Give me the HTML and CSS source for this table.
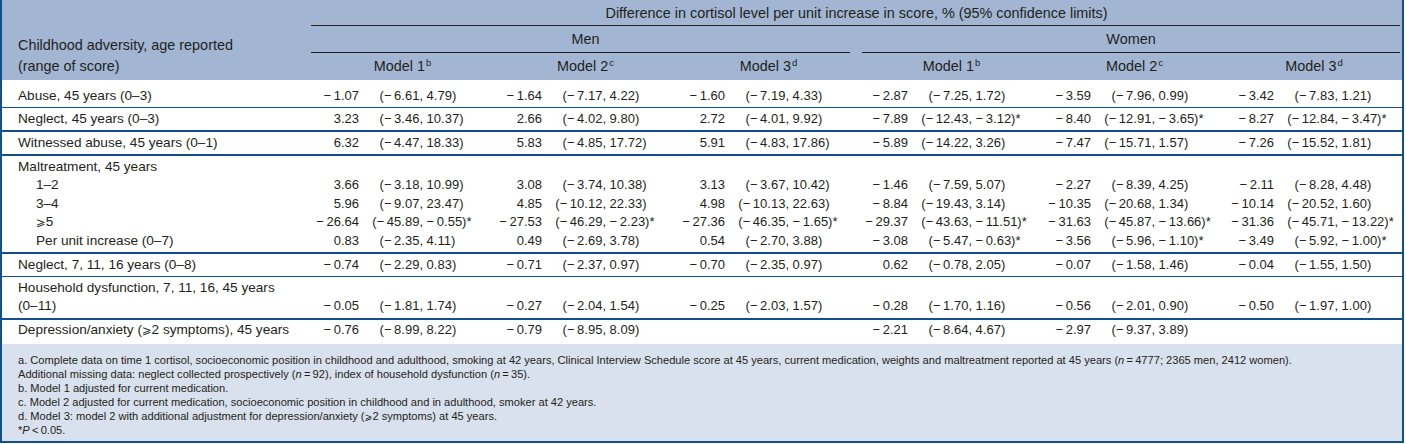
FILE: index.html
```html
<!DOCTYPE html>
<html lang="en">
<head>
<meta charset="utf-8">
<title>Childhood adversity and cortisol</title>
<link rel="stylesheet" href="styles.css">
</head>
<body>
<div class="tbl-wrap">
<table class="tbl">
<colgroup>
<col class="c-label">
<col class="c-model">
<col class="c-model">
<col class="c-model">
<col class="c-model">
<col class="c-model">
<col class="c-last">
</colgroup>
<thead>
<tr class="h1">
<th rowspan="3" class="h-label">Childhood adversity, age reported<br>(range of score)</th>
<th colspan="6" class="rule rule-top">Difference in cortisol level per unit increase in score, % (95% confidence limits)</th>
</tr>
<tr class="h2">
<th colspan="3" class="rule rule-men">Men</th>
<th colspan="3" class="rule rule-women">Women</th>
</tr>
<tr class="h3">
<th>Model 1<sup>b</sup></th>
<th>Model 2<sup>c</sup></th>
<th>Model 3<sup>d</sup></th>
<th>Model 1<sup>b</sup></th>
<th>Model 2<sup>c</sup></th>
<th>Model 3<sup>d</sup></th>
</tr>
</thead>
<tbody>
<tr class="first line-thin">
<td class="lab">Abuse, 45 years (0–3)</td>
<td><span class="v">−&thinsp;1.07</span><span class="cl">(−&thinsp;6.61,</span> 4.79)</td>
<td><span class="v">−&thinsp;1.64</span><span class="cl">(−&thinsp;7.17,</span> 4.22)</td>
<td><span class="v">−&thinsp;1.60</span><span class="cl">(−&thinsp;7.19,</span> 4.33)</td>
<td><span class="v">−&thinsp;2.87</span><span class="cl">(−&thinsp;7.25,</span> 1.72)</td>
<td><span class="v">−&thinsp;3.59</span><span class="cl">(−&thinsp;7.96,</span> 0.99)</td>
<td><span class="v">−&thinsp;3.42</span><span class="cl">(−&thinsp;7.83,</span> 1.21)</td>
</tr>
<tr class="line-thick">
<td class="lab">Neglect, 45 years (0–3)</td>
<td><span class="v">3.23</span><span class="cl">(−&thinsp;3.46,</span> 10.37)</td>
<td><span class="v">2.66</span><span class="cl">(−&thinsp;4.02,</span> 9.80)</td>
<td><span class="v">2.72</span><span class="cl">(−&thinsp;4.01,</span> 9.92)</td>
<td><span class="v">−&thinsp;7.89</span><span class="cl">(−&thinsp;12.43,</span> −&thinsp;3.12)*</td>
<td><span class="v">−&thinsp;8.40</span><span class="cl">(−&thinsp;12.91,</span> −&thinsp;3.65)*</td>
<td><span class="v">−&thinsp;8.27</span><span class="cl">(−&thinsp;12.84,</span> −&thinsp;3.47)*</td>
</tr>
<tr class="line-thick">
<td class="lab">Witnessed abuse, 45 years (0–1)</td>
<td><span class="v">6.32</span><span class="cl">(−&thinsp;4.47,</span> 18.33)</td>
<td><span class="v">5.83</span><span class="cl">(−&thinsp;4.85,</span> 17.72)</td>
<td><span class="v">5.91</span><span class="cl">(−&thinsp;4.83,</span> 17.86)</td>
<td><span class="v">−&thinsp;5.89</span><span class="cl">(−&thinsp;14.22,</span> 3.26)</td>
<td><span class="v">−&thinsp;7.47</span><span class="cl">(−&thinsp;15.71,</span> 1.57)</td>
<td><span class="v">−&thinsp;7.26</span><span class="cl">(−&thinsp;15.52,</span> 1.81)</td>
</tr>
<tr class="grp-top">
<td class="lab">Maltreatment, 45 years</td>
<td></td><td></td><td></td><td></td><td></td><td></td>
</tr>
<tr class="grp-mid">
<td class="lab sub">1–2</td>
<td><span class="v">3.66</span><span class="cl">(−&thinsp;3.18,</span> 10.99)</td>
<td><span class="v">3.08</span><span class="cl">(−&thinsp;3.74,</span> 10.38)</td>
<td><span class="v">3.13</span><span class="cl">(−&thinsp;3.67,</span> 10.42)</td>
<td><span class="v">−&thinsp;1.46</span><span class="cl">(−&thinsp;7.59,</span> 5.07)</td>
<td><span class="v">−&thinsp;2.27</span><span class="cl">(−&thinsp;8.39,</span> 4.25)</td>
<td><span class="v">−&thinsp;2.11</span><span class="cl">(−&thinsp;8.28,</span> 4.48)</td>
</tr>
<tr class="grp-mid">
<td class="lab sub">3–4</td>
<td><span class="v">5.96</span><span class="cl">(−&thinsp;9.07,</span> 23.47)</td>
<td><span class="v">4.85</span><span class="cl">(−&thinsp;10.12,</span> 22.33)</td>
<td><span class="v">4.98</span><span class="cl">(−&thinsp;10.13,</span> 22.63)</td>
<td><span class="v">−&thinsp;8.84</span><span class="cl">(−&thinsp;19.43,</span> 3.14)</td>
<td><span class="v">−&thinsp;10.35</span><span class="cl">(−&thinsp;20.68,</span> 1.34)</td>
<td><span class="v">−&thinsp;10.14</span><span class="cl">(−&thinsp;20.52,</span> 1.60)</td>
</tr>
<tr class="grp-mid">
<td class="lab sub"><span class="ge">⩾</span>5</td>
<td><span class="v">−&thinsp;26.64</span><span class="cl">(−&thinsp;45.89,</span> −&thinsp;0.55)*</td>
<td><span class="v">−&thinsp;27.53</span><span class="cl">(−&thinsp;46.29,</span> −&thinsp;2.23)*</td>
<td><span class="v">−&thinsp;27.36</span><span class="cl">(−&thinsp;46.35,</span> −&thinsp;1.65)*</td>
<td><span class="v">−&thinsp;29.37</span><span class="cl">(−&thinsp;43.63,</span> −&thinsp;11.51)*</td>
<td><span class="v">−&thinsp;31.63</span><span class="cl">(−&thinsp;45.87,</span> −&thinsp;13.66)*</td>
<td><span class="v">−&thinsp;31.36</span><span class="cl">(−&thinsp;45.71,</span> −&thinsp;13.22)*</td>
</tr>
<tr class="grp-bot line-thick">
<td class="lab sub">Per unit increase (0–7)</td>
<td><span class="v">0.83</span><span class="cl">(−&thinsp;2.35,</span> 4.11)</td>
<td><span class="v">0.49</span><span class="cl">(−&thinsp;2.69,</span> 3.78)</td>
<td><span class="v">0.54</span><span class="cl">(−&thinsp;2.70,</span> 3.88)</td>
<td><span class="v">−&thinsp;3.08</span><span class="cl">(−&thinsp;5.47,</span> −&thinsp;0.63)*</td>
<td><span class="v">−&thinsp;3.56</span><span class="cl">(−&thinsp;5.96,</span> −&thinsp;1.10)*</td>
<td><span class="v">−&thinsp;3.49</span><span class="cl">(−&thinsp;5.92,</span> −&thinsp;1.00)*</td>
</tr>
<tr class="line-thin">
<td class="lab">Neglect, 7, 11, 16 years (0–8)</td>
<td><span class="v">−&thinsp;0.74</span><span class="cl">(−&thinsp;2.29,</span> 0.83)</td>
<td><span class="v">−&thinsp;0.71</span><span class="cl">(−&thinsp;2.37,</span> 0.97)</td>
<td><span class="v">−&thinsp;0.70</span><span class="cl">(−&thinsp;2.35,</span> 0.97)</td>
<td><span class="v">0.62</span><span class="cl">(−&thinsp;0.78,</span> 2.05)</td>
<td><span class="v">−&thinsp;0.07</span><span class="cl">(−&thinsp;1.58,</span> 1.46)</td>
<td><span class="v">−&thinsp;0.04</span><span class="cl">(−&thinsp;1.55,</span> 1.50)</td>
</tr>
<tr class="line-thick two">
<td class="lab">Household dysfunction, 7, 11, 16, 45 years<br>(0–11)</td>
<td><span class="v">−&thinsp;0.05</span><span class="cl">(−&thinsp;1.81,</span> 1.74)</td>
<td><span class="v">−&thinsp;0.27</span><span class="cl">(−&thinsp;2.04,</span> 1.54)</td>
<td><span class="v">−&thinsp;0.25</span><span class="cl">(−&thinsp;2.03,</span> 1.57)</td>
<td><span class="v">−&thinsp;0.28</span><span class="cl">(−&thinsp;1.70,</span> 1.16)</td>
<td><span class="v">−&thinsp;0.56</span><span class="cl">(−&thinsp;2.01,</span> 0.90)</td>
<td><span class="v">−&thinsp;0.50</span><span class="cl">(−&thinsp;1.97,</span> 1.00)</td>
</tr>
<tr class="last">
<td class="lab">Depression/anxiety (<span class="ge">⩾</span>2 symptoms), 45 years</td>
<td><span class="v">−&thinsp;0.76</span><span class="cl">(−&thinsp;8.99,</span> 8.22)</td>
<td><span class="v">−&thinsp;0.79</span><span class="cl">(−&thinsp;8.95,</span> 8.09)</td>
<td></td>
<td><span class="v">−&thinsp;2.21</span><span class="cl">(−&thinsp;8.64,</span> 4.67)</td>
<td><span class="v">−&thinsp;2.97</span><span class="cl">(−&thinsp;9.37,</span> 3.89)</td>
<td></td>
</tr>
</tbody>
</table>
<div class="notes">
<p>a. Complete data on time 1 cortisol, socioeconomic position in childhood and adulthood, smoking at 42 years, Clinical Interview Schedule score at 45 years, current medication, weights and maltreatment reported at 45 years (<i>n</i>&thinsp;=&thinsp;4777; 2365 men, 2412 women).</p>
<p>Additional missing data: neglect collected prospectively (<i>n</i>&thinsp;=&thinsp;92), index of household dysfunction (<i>n</i>&thinsp;=&thinsp;35).</p>
<p>b. Model 1 adjusted for current medication.</p>
<p>c. Model 2 adjusted for current medication, socioeconomic position in childhood and in adulthood, smoker at 42 years.</p>
<p>d. Model 3: model 2 with additional adjustment for depression/anxiety (<span class="ge">⩾</span>2 symptoms) at 45 years.</p>
<p>*<i>P</i>&thinsp;&lt;&thinsp;0.05.</p>
</div>
</div>
</body>
</html>
```

FILE: styles.css
```css
html, body {
  margin: 0;
  padding: 0;
  background: #ffffff;
}

body {
  font-family: "Liberation Sans", Arial, "DejaVu Sans", sans-serif;
  color: #231f20;
}

.tbl-wrap {
  width: 1400px;
  border: 2px solid #12508d;
  border-top: 0;
}

.tbl {
  width: 1400px;
  table-layout: fixed;
  border-collapse: separate;
  border-spacing: 0;
  font-size: 13px;
  line-height: 18.5px;
}

.c-label { width: 309px; }
.c-model { width: 183px; }
.c-last { width: 176px; }

thead th {
  background-color: #a2b6d3;
  font-weight: normal;
  font-size: 14.4px;
  padding: 0;
  text-align: center;
  vertical-align: middle;
  white-space: nowrap;
}

.h1 th { height: 26px; }
.h2 th { height: 27px; }
.h3 th { height: 27px; }

thead th.h-label {
  text-align: left;
  vertical-align: bottom;
  line-height: 21px;
  padding: 0 0 3px 16px;
}

.rule {
  background-image: linear-gradient(#231f20, #231f20);
  background-repeat: no-repeat;
}

.rule-top {
  background-size: calc(100% - 2px) 1px;
  background-position: left bottom;
}

.rule-men {
  background-size: calc(100% - 10px) 1px;
  background-position: left bottom;
}

.rule-women {
  background-size: calc(100% - 4px) 1px;
  background-position: 2px bottom;
}

sup {
  font-size: 9.5px;
  line-height: 0;
  vertical-align: 5px;
  margin-left: 1px;
}

tbody td {
  padding: 1.75px 0;
  text-align: left;
  vertical-align: middle;
  white-space: nowrap;
}

tbody td.lab {
  padding-left: 16px;
  font-size: 13.6px;
}

tbody td.lab.sub { padding-left: 34px; }

tr.first td { padding-top: 6.75px; }
tr.last td { padding-bottom: 3.75px; }

tr.grp-top td { padding-bottom: 0; }
tr.grp-mid td { padding-top: 0; padding-bottom: 0; }
tr.grp-bot td { padding-top: 0; }

tr.two td { vertical-align: bottom; }

tr.line-thin td { border-bottom: 1px solid #12508d; }
tr.line-thick td { border-bottom: 2px solid #12508d; }

.v {
  display: inline-block;
  width: 48px;
  text-align: right;
}

.cl {
  display: inline-block;
  width: 64px;
  text-align: right;
}

.ge {
  font-family: "DejaVu Sans", sans-serif;
  font-size: 0.85em;
  line-height: 0;
}

.notes {
  background: #d9e1ee;
  padding: 9.5px 16px 4px;
  font-size: 11.1px;
  line-height: 14px;
}

.notes p {
  margin: 0;
  height: 14px;
  white-space: nowrap;
}
```
